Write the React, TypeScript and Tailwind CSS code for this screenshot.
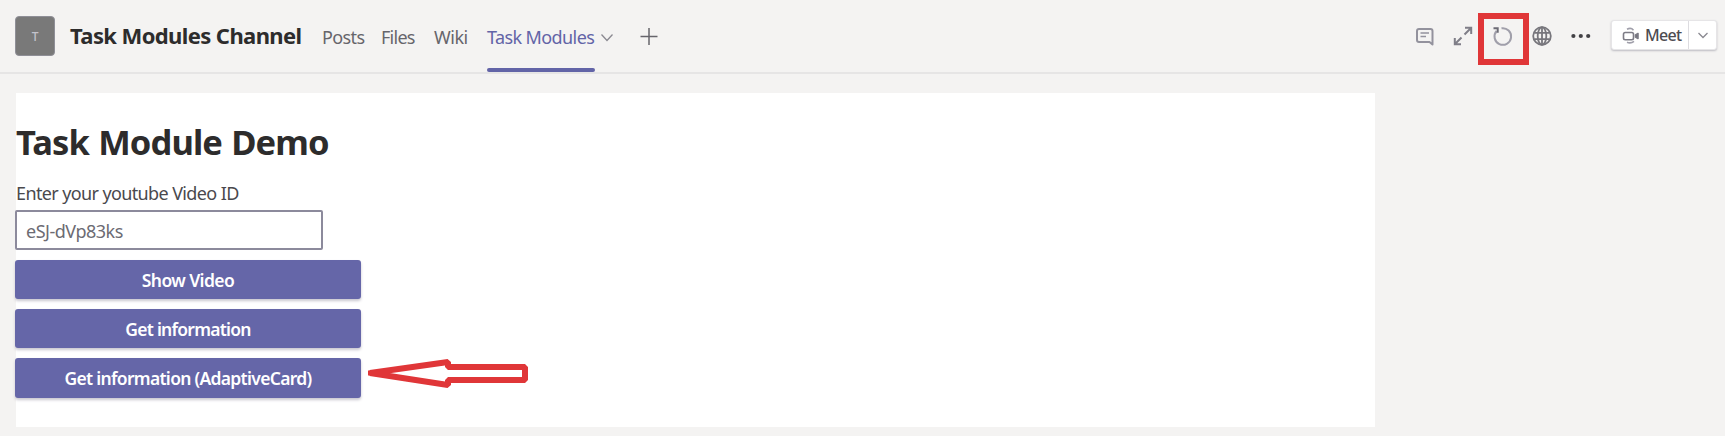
import React from 'react';

const tabs = [
  { name: 'Posts', box: 'w-[59px] tracking-[-0.6px]' },
  { name: 'Files', box: 'w-[53px] tracking-[-0.75px]' },
  { name: 'Wiki', box: 'w-[52px] tracking-[-0.5px]' },
];

const buttons = [
  { name: 'Show Video', style: 'mt-[10px] h-[39px] tracking-[-0.6px]' },
  { name: 'Get information', style: 'mt-[10px] h-[39px] tracking-[-0.75px]' },
  { name: 'Get information (AdaptiveCard)', style: 'mt-[10px] h-[40px] tracking-[-0.7px]' },
];

function Header() {
  return (
    <header className="flex h-[74px] items-start border-b-2 border-[#e6e5e5] pl-[15px]">
      <div className="mt-4 flex h-10 w-10 items-center justify-center rounded-[4px] border border-[#8f8f97] bg-[#797979] pt-[2px] text-[12px] font-medium text-[#c3c2cb]">T</div>
      <h2 className="ml-[15px] mt-[20px] w-[238px] whitespace-nowrap text-[22px] font-bold leading-[30px] tracking-[-0.6px] text-[#2d2c2c]">Task Modules Channel</h2>
      <nav className="ml-[14px] mt-[24px] flex text-[18px] leading-[27px] text-[#66656b]">
        {tabs.map((t) => (
          <span key={t.name} className={`whitespace-nowrap ${t.box}`}>{t.name}</span>
        ))}
        <div className="ml-px flex h-12 w-[108px] flex-col justify-between text-[#6264a7]">
          <span className="whitespace-nowrap tracking-[-0.6px]">Task Modules</span>
          <span className="h-1 shrink-0 rounded-sm bg-[#6264a7]" />
        </div>
      </nav>
      <svg className="ml-[5px] mt-[33px]" width="14" height="10" viewBox="0 0 14 10" fill="none" stroke="#8a8991" strokeWidth="1.3"><path d="M1.5 1.5 7 7.5l5.5-6" /></svg>
      <svg className="ml-[26px] mt-[27px]" width="18" height="19" viewBox="0 0 18 19" fill="none" stroke="#66656b" strokeWidth="1.5"><path d="M9 1v17M.5 9.5h17" /></svg>
      <Toolbar />
    </header>
  );
}

function Toolbar() {
  return (
    <div className="ml-auto mr-[8px] flex items-start">
      <svg className="mt-[27px]" width="19" height="19" viewBox="0 0 19 19" fill="none" stroke="#93929d" strokeWidth="2" strokeLinejoin="round"><path d="M4 2h11.500Q17.500 2 17.500 4v13.500L14.500 15H4Q2 15 2 13V4Q2 2 4 2Z" /><path d="M5.500 6h8.500M5.500 9.500h5.500" strokeWidth="1.6" /></svg>
      <svg className="ml-[19px] mt-[26px]" width="20" height="20" viewBox="0 0 20 20" fill="none" stroke="#7f7e88" strokeWidth="2"><path d="M11.5 8.500 18 2M12 1.800h6.200V8M8.500 11.500 2 18M1.800 12v6.200H8" /></svg>
      <div className="ml-[5px] mt-[13px] flex h-[52px] w-[51px] items-start border-[6px] border-[#e03638] pl-[8px] pt-[7px]">
        <svg width="22" height="22" viewBox="0 0 22 22" fill="none" stroke="#a09faa" strokeWidth="2"><path d="M9.500 2.300A8.300 8.300 0 1 1 4.600 5" /><path d="M1.500 2.300h4.200v4.500" stroke="#6c6b75" /></svg>
      </div>
      <svg className="ml-[3px] mt-[26px]" width="20" height="20" viewBox="0 0 20 20" fill="none" stroke="#77767c" strokeWidth="1.8"><circle cx="10" cy="10" r="8.8" /><ellipse cx="10" cy="10" rx="4.3" ry="8.8" /><path d="M10 1.2v17.600M2.200 6.800h15.600M2.200 13.200h15.600" /></svg>
      <svg className="ml-[19px] mt-[33px]" width="20" height="6" viewBox="0 0 20 6" fill="#424145"><circle cx="2.4" cy="3" r="2.1" /><circle cx="9.8" cy="3" r="2.1" /><circle cx="17.2" cy="3" r="2.1" /></svg>
      <div className="ml-[20px] mt-[20px] flex h-[30px] w-[106px] rounded-[3px] border border-[#e6e5e7] bg-white shadow-[0_1px_2px_#bdbcc2]">
        <div className="flex w-[77px] items-start border-r border-[#dddce0] pl-[10px]">
          <svg className="mt-[6px] shrink-0" width="18" height="17" viewBox="0 0 18 17" fill="none" stroke="#7d7c86" strokeWidth="1.6" strokeLinejoin="round"><path d="M3.200 5.500h6.600q1.700 0 1.700 1.700v3.800q0 1.700-1.700 1.700H3.200q-1.700 0-1.700-1.700V7.200q0-1.700 1.700-1.700Z" /><path d="m13.500 8 2.500-1.500v5L13.500 10Z" fill="#6c6b75" /><path d="M5 2.300Q9 .2 11.500 3.200M5 15.300q4 1.500 7-1" stroke="#a09faa" /></svg>
          <span className="ml-[5px] mt-[2px] whitespace-nowrap text-[16px] font-medium leading-[24px] tracking-[-0.7px] text-[#4c4b50]">Meet</span>
        </div>
        <svg className="ml-[8px] mt-[10px]" width="12" height="9" viewBox="0 0 12 9" fill="none" stroke="#8a8991" strokeWidth="1.3"><path d="m1.500 2 4.500 4.500L10.500 2" /></svg>
      </div>
    </div>
  );
}

export default function App() {
  return (
    <div className="h-[436px] w-[1725px] overflow-hidden bg-[#f4f3f2] font-['Noto_Sans','Open_Sans',sans-serif]">
      <Header />
      <main className="ml-[16px] mt-[19px] h-[334px] w-[1359px] bg-white">
        <h1 className="whitespace-nowrap pt-[25px] text-[34.5px] font-bold leading-[48px] tracking-[-0.9px] [word-spacing:1.2px] text-[#2d2c2c]">Task Module Demo</h1>
        <label htmlFor="video" className="mt-[14px] block whitespace-nowrap text-[18px] leading-[27px] tracking-[-0.62px] text-[#4a494d]">Enter your youtube Video ID</label>
        <input id="video" defaultValue="eSJ-dVp83ks" className="-ml-px mt-[3px] block h-[40px] w-[308px] rounded-[2px] border-2 border-[#8c8a9c] bg-white pl-[9px] pt-[2px] text-[18px] tracking-[-0.5px] text-[#6c6b73] outline-none" />
        <div className="relative -ml-px w-[346px]">
          {buttons.map((b) => (
            <button key={b.name} className={`block w-full whitespace-nowrap rounded-[3px] bg-[#6566a8] pt-px text-center text-[17.5px] font-semibold leading-[39px] text-white shadow-[0_2px_3px_#c9c7d0] ${b.style}`}>{b.name}</button>
          ))}
          <svg className="absolute left-[350px] top-[95px]" width="170" height="36" viewBox="0 0 170 36" fill="none" stroke="#e03638" strokeWidth="6"><path d="M5 18 83 7v5h77v13H83v5Z" strokeLinejoin="bevel" /><path d="M3 18h18" strokeWidth="5" /></svg>
        </div>
      </main>
    </div>
  );
}
